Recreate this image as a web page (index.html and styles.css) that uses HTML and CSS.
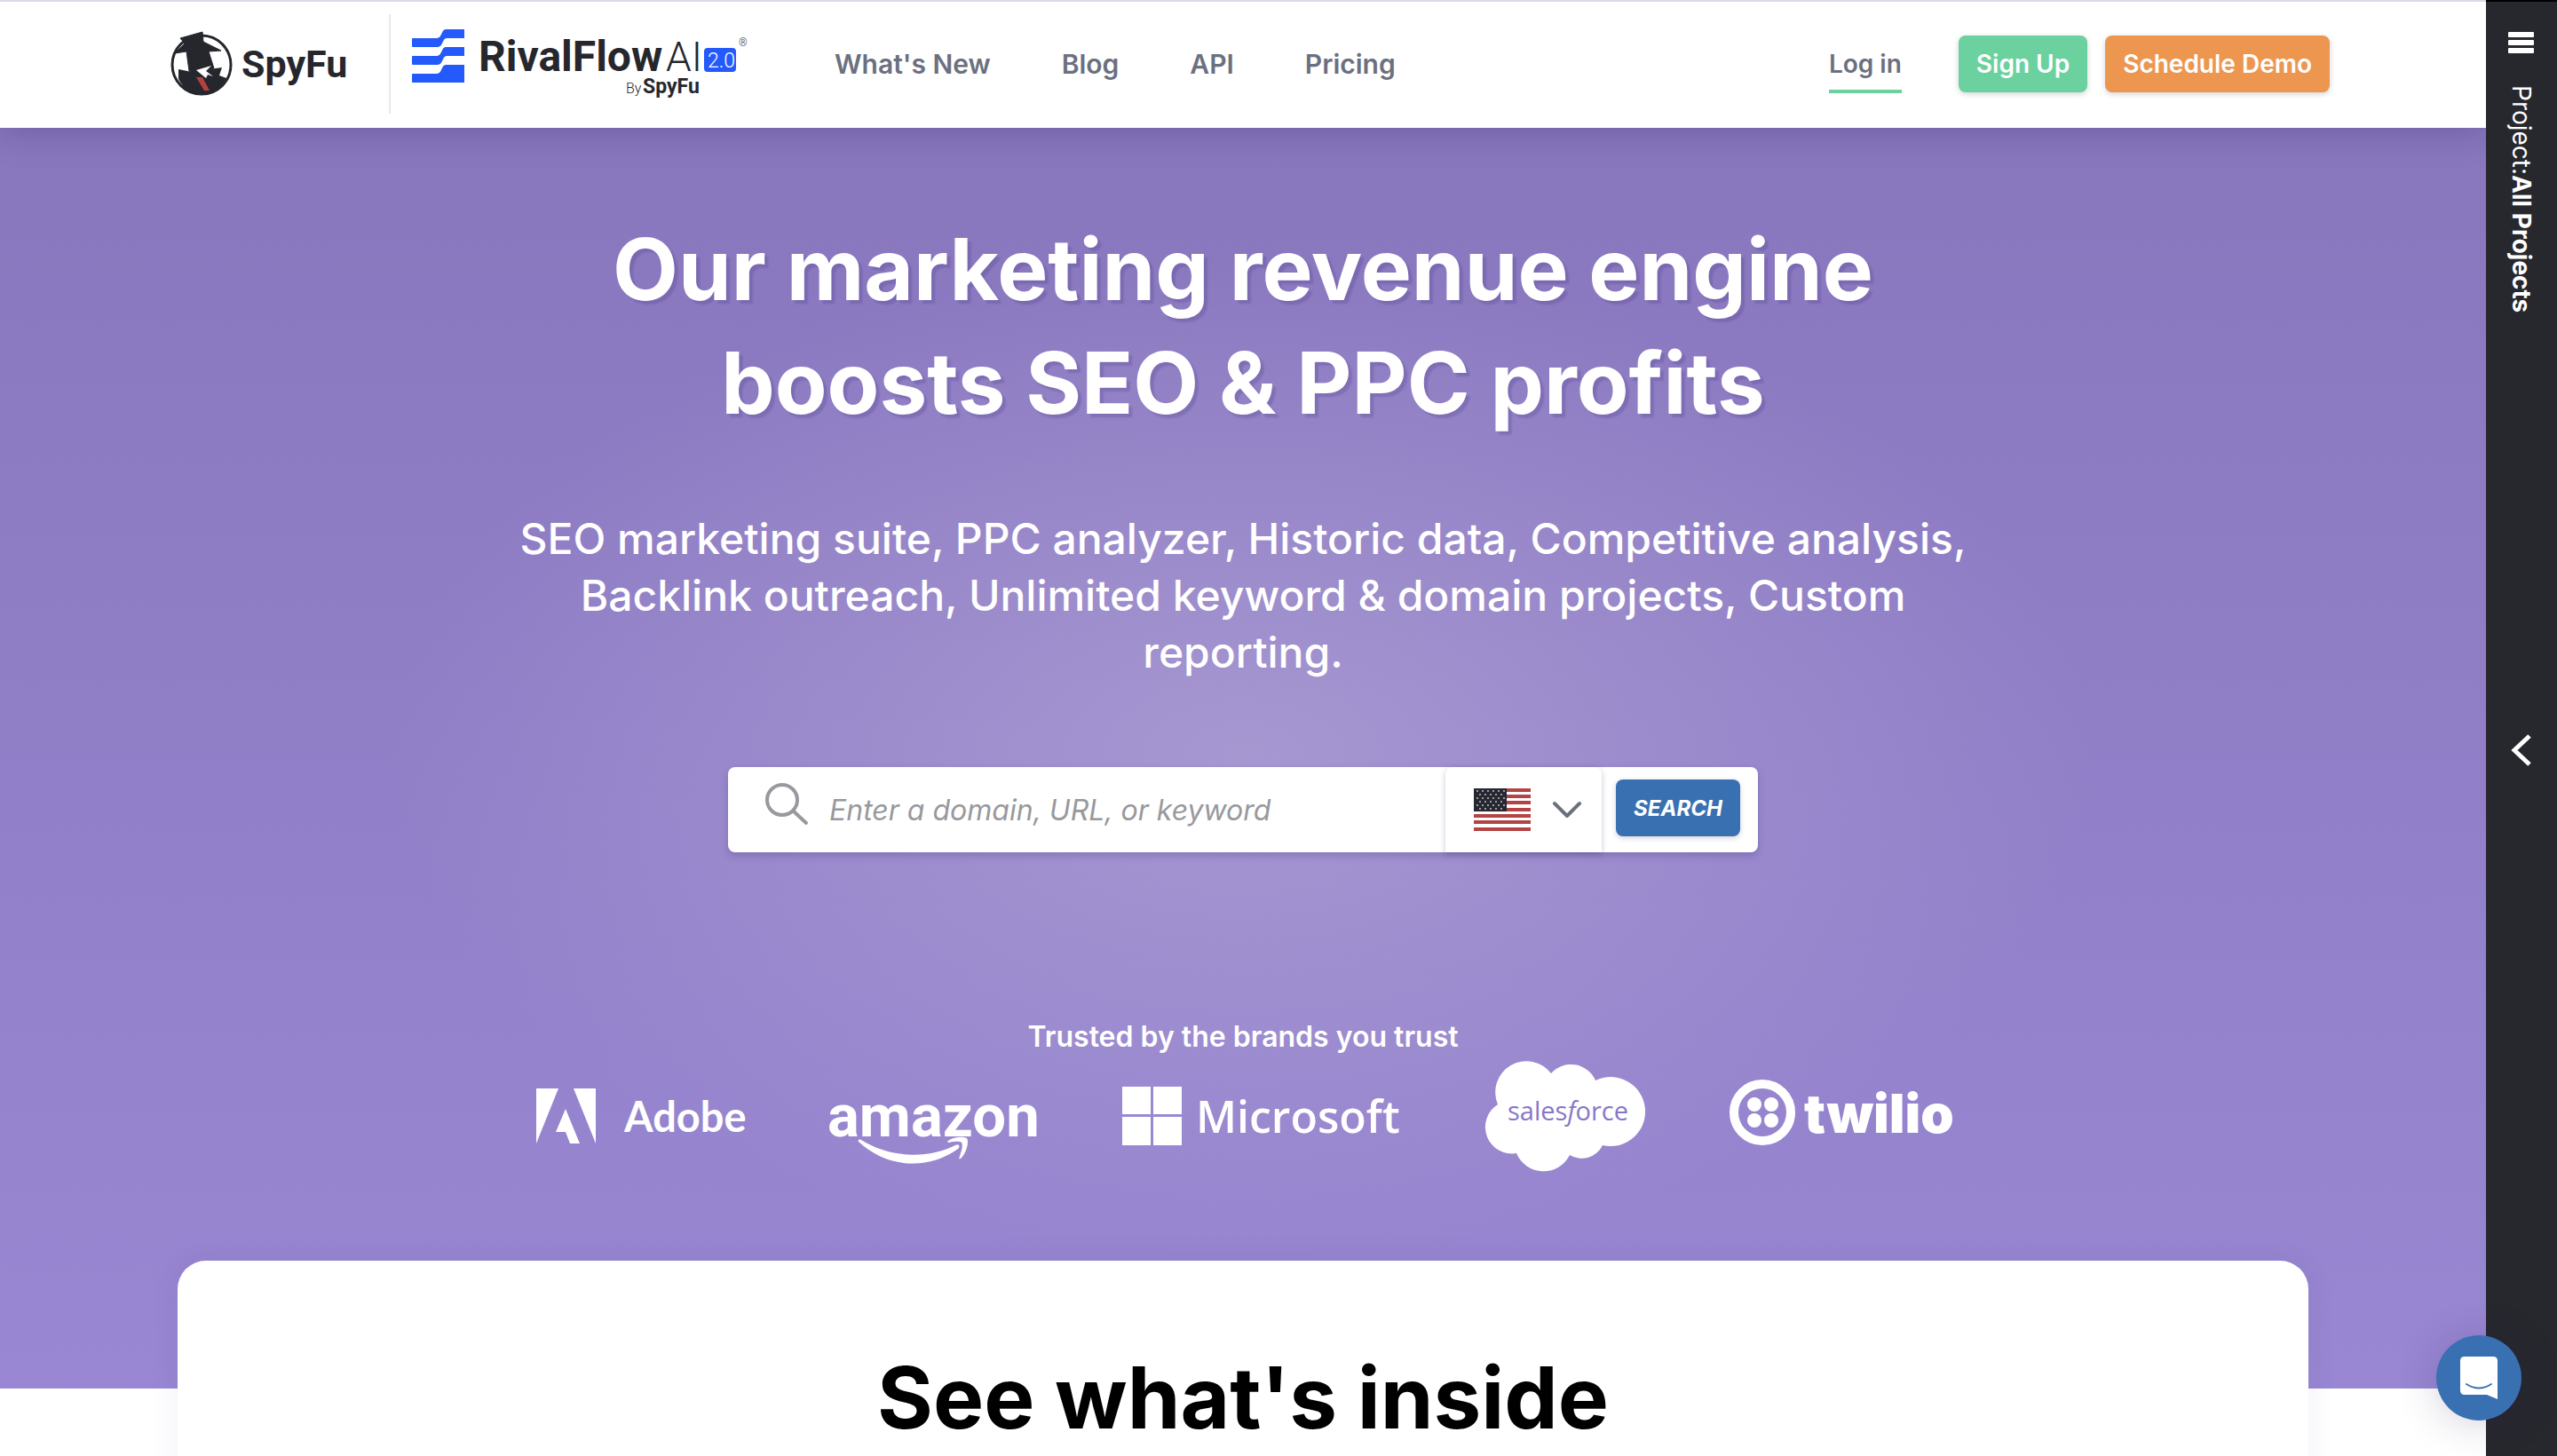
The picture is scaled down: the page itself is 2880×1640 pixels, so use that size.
FILE: index.html
```html
<!DOCTYPE html>
<html lang="en">
<head>
    <meta charset="UTF-8">
    <meta name="viewport" content="width=device-width, initial-scale=1.0">
    <title>SpyFu</title>
    <link rel="stylesheet" href="styles.css">
</head>
<body>
    <div class="page">
        <header class="header">
            <div class="header-inner">
                <a href="#" class="logo" aria-label="SpyFu home">
                    <svg width="204" height="80" viewBox="0 0 204 80">
                        <circle cx="35" cy="39" r="33" fill="#fff" stroke="#26272d" stroke-width="3"/>
                        <path d="M9 55c8 15 18 18 27 18s21-7 27-19l-8-3 3-9-14 2-15 4-20-4z" fill="#26272d"/>
                        <path d="M11 9 36 2l1 11 20 10-14 1 6 19-9 2-12 4-7-3-3-22-13 2 11-11z" fill="#26272d" stroke="#26272d"/>
                        <path d="m29 45 17-5-6 6 8 6-6-2-2 4z" fill="#fff"/>
                        <path d="M29 53h7l8 15h-6z" fill="#b6403f"/>
                        <text x="80" y="53" class="condensed" font-size="43">SpyFu</text>
                    </svg>
                </a>
                <span class="divider"></span>
                <a href="#" class="logo" aria-label="RivalFlow AI">
                    <svg width="390" height="80" viewBox="0 0 390 80">
                        <g fill="#2459fb">
                            <path id="bar" d="M0 10q0-1 1-1h27c6 0 5-10 10-10h21v10H39c-5 0-4 10-10 10H1q-1 0-1-1z"/>
                            <use href="#bar" y="20"/>
                            <path d="M0 50q0-1 1-1h27c6 0 5-10 10-10h21v20H1q-1 0-1-1z"/>
                            <rect x="329" y="20" width="36" height="27" rx="4"/>
                        </g>
                        <text x="75" y="46" class="condensed" font-size="48">RivalFlow</text>
                        <text x="286" y="46" class="thin" font-size="46">AI</text>
                        <text x="333" y="42" class="thin badge" font-size="23">2.0</text>
                        <text x="368" y="18" class="thin" font-size="12">®</text>
                        <text x="241" y="71" class="thin" font-size="16">By</text>
                        <text x="260" y="71" class="condensed" font-size="23">SpyFu</text>
                    </svg>
                </a>
                <nav class="nav">
                    <a href="#">What's New</a>
                    <a href="#">Blog</a>
                    <a href="#">API</a>
                    <a href="#">Pricing</a>
                </nav>
                <div class="account">
                    <a href="#" class="login">Log in</a>
                    <button type="button" class="btn btn-green">Sign Up</button>
                    <button type="button" class="btn btn-orange">Schedule Demo</button>
                </div>
            </div>
        </header>

        <main class="content">
            <section class="hero">
                <h1>Our marketing revenue engine<br>boosts SEO &amp; PPC profits</h1>
                <p class="lead">SEO marketing suite, PPC analyzer, Historic data, Competitive analysis, Backlink outreach, Unlimited keyword &amp; domain projects, Custom reporting.</p>

                <form class="search">
                    <label for="query" class="search-icon" aria-label="Search term">
                        <svg width="48" height="48" viewBox="0 0 48 48" fill="none" stroke="#98999f" stroke-width="4" stroke-linecap="round">
                            <circle cx="19" cy="19" r="17"/>
                            <path d="m32 32 14 13"/>
                        </svg>
                    </label>
                    <input type="text" id="query" placeholder="Enter a domain, URL, or keyword">
                    <div class="country">
                        <svg width="64" height="48" viewBox="0 0 64 48">
                            <rect width="64" height="48" fill="#fff"/>
                            <path d="M0 2h64M0 9h64M0 16h64M0 24h64M0 31h64M0 38h64M0 46h64" stroke="#b44444" stroke-width="4"/>
                            <rect width="37" height="26" fill="#26272f"/>
                            <g stroke="#9a9ba8" stroke-width="2">
                                <path d="M3 3h33M3 11h33M3 19h33" stroke-dasharray="2 4"/>
                                <path d="M6 7h30M6 15h30M6 23h30" stroke-dasharray="2 4"/>
                            </g>
                        </svg>
                        <svg width="32" height="20" viewBox="0 0 32 20" fill="none" stroke="#6b7080" stroke-width="4" stroke-linecap="round" stroke-linejoin="round">
                            <path d="m2 3 14 14L30 3"/>
                        </svg>
                        <select aria-label="Country">
                            <option>US</option>
                        </select>
                    </div>
                    <button type="button" class="btn btn-blue">SEARCH</button>
                </form>

                <p class="trusted">Trusted by the brands you trust</p>
                <div class="brands">
                    <svg width="234" height="124" viewBox="0 0 234 124">
                        <path d="M0 30h25L0 92zM42 30h25v62zM33 53l16 39H38l-5-13H22z"/>
                        <text x="99" y="79" class="adobe">Adobe</text>
                    </svg>
                    <svg width="234" height="124" viewBox="0 0 234 124">
                        <text x="-2" y="84" class="amazon">amazon</text>
                        <path d="M33 90c-1-2 1-3 3-2 32 20 74 22 106 6 4-2 6 1 3 4-36 26-82 20-112-8z"/>
                        <path d="M134 89c6-5 17-5 21-3 3 4-1 18-7 23-2 1-2 0-1-3 2-6 4-12 2-15-3-2-9-1-15 0-1 0-1-1 0-2z"/>
                    </svg>
                    <svg width="312" height="124" viewBox="0 0 312 124">
                        <path d="M0 28h32v31H0zM35 28h32v31H35zM0 62h32v32H0zM35 62h32v32H35z"/>
                        <text x="83" y="80" class="microsoft">Microsoft</text>
                    </svg>
                    <svg width="180" height="124" viewBox="0 0 180 124">
                        <path d="M75 13A30 30 0 0 1 125 21A39 39 0 1 1 133 94A26 26 0 0 1 96 105A33 33 0 0 1 36 103A30 30 0 0 1 15 48A35 35 0 0 1 75 13z"/>
                        <text x="26" y="66" class="salesforce">sales<tspan font-style="italic">f</tspan>orce</text>
                    </svg>
                    <svg width="248" height="124" viewBox="0 0 248 124">
                        <circle cx="37" cy="57" r="32" fill="none" stroke="#fff" stroke-width="10"/>
                        <circle cx="28" cy="48" r="8"/>
                        <circle cx="47" cy="48" r="8"/>
                        <circle cx="28" cy="66" r="8"/>
                        <circle cx="47" cy="66" r="8"/>
                        <text x="84" y="80" class="twilio">twilio</text>
                    </svg>
                </div>
            </section>

            <section class="card">
                <h2>See what's inside</h2>
            </section>
        </main>
    </div>

    <aside class="sidebar">
        <button type="button" class="icon-btn" aria-label="Menu">
            <svg width="30" height="24" viewBox="0 0 30 24" fill="#fff">
                <rect width="29" height="6" rx="1"/>
                <rect y="9" width="29" height="6" rx="1"/>
                <rect y="18" width="29" height="6" rx="1"/>
            </svg>
        </button>
        <div class="project">Project:<b>All Projects</b></div>
        <button type="button" class="icon-btn expand" aria-label="Expand projects">
            <svg width="24" height="36" viewBox="0 0 24 36" fill="none" stroke="#fff" stroke-width="5">
                <path d="M21 2 4 18l17 16"/>
            </svg>
        </button>
    </aside>

    <button type="button" class="chat" aria-label="Open chat">
        <svg width="42" height="48" viewBox="0 0 42 48">
            <path d="M5 0h32q5 0 5 5v43l-12-5H5q-5 0-5-5V5q0-5 5-5z" fill="#fff"/>
            <path d="M7 31q14 9 28 0" fill="none" stroke="#3970b2" stroke-width="2" stroke-linecap="round"/>
        </svg>
    </button>
</body>
</html>
```
FILE: styles.css
```css
* {
    box-sizing: border-box;
}
body {
    margin: 0;
    height: 100vh;
    display: flex;
    overflow: hidden;
    font-family: Inter, "Liberation Sans", sans-serif;
    background: #fff;
}
a {
    color: inherit;
    text-decoration: none;
}
svg {
    display: block;
    overflow: visible;
}
h1, h2, p {
    margin: 0;
}
button {
    font: inherit;
    border: 0;
    cursor: pointer;
}

/* header */
.page {
    flex: 1;
    min-width: 0;
    overflow: hidden;
}
.header {
    position: relative;
    z-index: 1;
    height: 144px;
    background: #fff;
    border-top: 2px solid #dcd9e9;
    box-shadow: 0 4px 36px rgba(40, 20, 80, 0.25);
}
.header-inner {
    display: flex;
    align-items: center;
    max-width: 2448px;
    height: 100%;
    margin: 0 auto;
    padding: 0 0 2px 16px;
    font-weight: 600;
    color: #6b7080;
}
.logo {
    padding-top: 4px;
}
.divider {
    width: 2px;
    height: 112px;
    margin: 0 24px 0 42px;
    background: #e9e9f0;
}
.condensed {
    font-family: Roboto, sans-serif;
    font-weight: 700;
    fill: #26272d;
}
.thin {
    font-family: Roboto, sans-serif;
    font-weight: 300;
    fill: #26272d;
}
.badge {
    fill: #fff;
}
.nav {
    display: flex;
    gap: 80px;
    margin-left: 86px;
    font-size: 30px;
}
.account {
    display: flex;
    align-items: center;
    margin-left: auto;
    font-size: 28px;
}
.login {
    margin-right: 64px;
    padding-top: 4px;
    line-height: 58px;
    border-bottom: 4px solid #6bd19f;
}
.btn {
    height: 64px;
    padding: 0 20px;
    border-radius: 8px;
    color: #fff;
    box-shadow: 0 2px 6px rgba(40, 40, 80, 0.2);
}
.btn-green {
    margin-right: 20px;
    background: #6bd19f;
}
.btn-orange {
    background: #ed9650;
}
.btn-blue {
    width: 140px;
    margin: 14px 20px 0 16px;
    align-self: flex-start;
    background: #3970b2;
    font-size: 24px;
    font-weight: 700;
    font-style: italic;
}

/* hero */
.hero {
    display: flex;
    flex-direction: column;
    align-items: center;
    padding: 95px 0 244px;
    color: #fff;
    text-align: center;
    background:
        radial-gradient(960px 560px at 50% 50%, rgba(178, 164, 214, 0.65), rgba(178, 164, 214, 0)),
        linear-gradient(#8877bd, #9987d3);
}
h1 {
    font-size: 96px;
    line-height: 128px;
    font-weight: 700;
    text-shadow: 4px 4px 2px rgba(60, 40, 120, 0.2);
}
.lead {
    max-width: 1680px;
    margin-top: 80px;
    font-size: 48px;
    line-height: 64px;
    font-weight: 500;
}
.search {
    display: flex;
    align-items: center;
    width: 1160px;
    height: 96px;
    margin-top: 97px;
    border-radius: 8px;
    background: #fff;
    box-shadow: 0 4px 8px rgba(60, 40, 120, 0.25);
}
.search-icon {
    margin: 0 24px 12px 42px;
}
.search input {
    flex: 1;
    min-width: 0;
    height: 100%;
    padding: 0;
    border: 0;
    outline: 0;
    background: none;
    font: italic 32px Inter, sans-serif;
}
.search input::placeholder {
    color: #98999d;
}
.country {
    position: relative;
    display: flex;
    align-items: center;
    gap: 25px;
    width: 176px;
    height: 96px;
    padding-left: 32px;
    border-radius: 8px 8px 0 0;
    box-shadow: 0 2px 6px rgba(40, 30, 90, 0.25);
}
.country select {
    position: absolute;
    inset: 0;
    opacity: 0;
}
.trusted {
    margin-top: 188px;
    font-size: 32px;
    line-height: 40px;
    font-weight: 600;
}
.brands {
    display: flex;
    gap: 96px;
    margin-top: 8px;
    fill: #fff;
}
.adobe {
    font: 700 47px Lato, sans-serif;
}
.amazon {
    font: 700 67px Roboto, sans-serif;
}
.microsoft {
    font: 600 50px "Open Sans", sans-serif;
}
.salesforce {
    font: 500 29px "Open Sans", sans-serif;
    fill: #8877c8;
}
.twilio {
    font: 900 60px Inter, sans-serif;
}

/* card overlapping the bottom of the hero */
.card {
    position: relative;
    max-width: 2400px;
    margin: -144px auto 0;
    padding: 90px 64px 128px;
    border-radius: 32px;
    background: #fff;
    box-shadow: 0 0 32px rgba(60, 40, 120, 0.08);
    text-align: center;
}
h2 {
    font-size: 96px;
    line-height: 128px;
    font-weight: 700;
    color: #000;
}

/* right rail */
.sidebar {
    position: relative;
    display: flex;
    flex-direction: column;
    align-items: center;
    width: 80px;
    padding-top: 34px;
    border-top: 2px solid #000;
    background: #27282e;
    color: #fff;
}
.icon-btn {
    padding: 0;
    background: none;
}
.project {
    margin-top: 36px;
    writing-mode: vertical-rl;
    font-size: 28px;
    line-height: 40px;
}
.expand {
    position: absolute;
    top: 50%;
    margin-top: 6px;
}
.chat {
    position: fixed;
    z-index: 2;
    right: 40px;
    bottom: 40px;
    display: grid;
    place-items: center;
    width: 96px;
    height: 96px;
    padding: 0;
    border-radius: 50%;
    background: #3970b2;
    box-shadow: 0 4px 48px rgba(40, 20, 80, 0.2);
}
```
